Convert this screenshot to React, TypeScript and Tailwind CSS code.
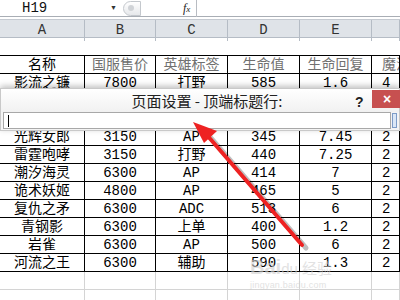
import React from "react";

const cols = ["A", "B", "C", "D", "E", ""];
const grid = "grid grid-cols-[85px_71px_72px_72px_72px_28px]";

const rows: string[][] = [
  ["影流之镰", "7800", "打野", "585", "1.6", "4"],
  ["", "", "", "", "", ""],
  ["", "", "", "", "", ""],
  ["光辉女郎", "3150", "AP", "345", "7.45", "2"],
  ["雷霆咆哮", "3150", "打野", "440", "7.25", "2"],
  ["潮汐海灵", "6300", "AP", "414", "7", "2"],
  ["诡术妖姬", "4800", "AP", "465", "5", "2"],
  ["复仇之矛", "6300", "ADC", "513", "6", "2"],
  ["青钢影", "6300", "上单", "400", "1.2", "2"],
  ["岩雀", "6300", "AP", "500", "6", "2"],
  ["河流之王", "6300", "辅助", "590", "1.3", "2"],
];

const cellFont = "font-['Liberation_Mono','Noto_Sans_CJK_SC',monospace]";

const Cell = ({ text, gray, last }: { text: string; gray?: boolean; last?: boolean }) => (
  <div
    className={`h-[18px] border-r border-b border-black flex items-center overflow-hidden whitespace-nowrap text-[14px] leading-none ${cellFont} ${
      gray ? "text-[#707070]" : "text-black"
    } ${last ? "justify-start pl-[10px]" : "justify-center"}`}
  >
    {text}
  </div>
);

const App = () => {
  return (
    <div className="relative w-[400px] h-[300px] overflow-hidden bg-white">
      {/* formula bar */}
      <div className="h-[17px] flex items-center border-b border-[#a9aeb5] bg-white">
        <div className="w-[110px] pl-[22px] text-[14px] font-['Liberation_Mono',monospace] text-[#111]">
          H19
        </div>
        <div className="text-[7px] text-[#333] w-[10px]">▼</div>
        <div className="ml-[3px] w-[18px] h-[15px] rounded-l-full border border-[#c4c8cd] bg-gradient-to-b from-white to-[#e6e8eb] flex items-center pl-[4px]">
          <div className="w-[6px] h-[6px] rounded-full bg-[#d0d3d7]" />
        </div>
        <div className="ml-[42px] text-[12px] italic font-['Liberation_Serif',serif] text-[#222]">
          f<span className="text-[9px]">x</span>
        </div>
        <div className="ml-[6px] h-[17px] border-l border-[#b8bcc2]" />
      </div>
      <div className="h-[3px] bg-white border-b border-[#c5cad1]" />
      {/* column headers */}
      <div className={`${grid} h-[18px] bg-[#dfe3e8] border-b border-[#b5bcc5]`}>
        {cols.map((c, i) => (
          <div
            key={i}
            className="border-r border-[#b5bcc5] flex items-center justify-center text-[14px] font-['Liberation_Mono',monospace] text-[#333]"
          >
            {c}
          </div>
        ))}
      </div>
      {/* empty row 1 */}
      <div className="h-[18px] border-b border-black" />
      {/* table header */}
      <div className={grid}>
        <Cell text="名称" />
        <Cell text="国服售价" gray />
        <Cell text="英雄标签" gray />
        <Cell text="生命值" gray />
        <Cell text="生命回复" gray />
        <Cell text="魔法值" gray last />
      </div>
      {rows.map((r, i) => (
        <div key={i} className={grid}>
          {r.map((t, j) => (
            <Cell key={j} text={t} last={j === 5} />
          ))}
        </div>
      ))}
      {[0, 1].map((i) => (
        <div key={i} className={grid}>
          {cols.map((_, j) => (
            <div key={j} className="h-[18px] border-r border-b border-[#d4d4d4]" />
          ))}
        </div>
      ))}

      {/* watermark */}
      <div className="absolute left-[250px] top-[257px] text-[#cfcfcf] opacity-60 font-['Liberation_Sans','Noto_Sans_CJK_SC',sans-serif] leading-none">
        <div className="text-[20px] font-bold">
          Bai<span className="text-[15px] font-normal">du 经验</span>
        </div>
        <div className="text-[9px] mt-[4px] tracking-wide">jingyan.baidu.com</div>
      </div>

      {/* dialog */}
      <div className="absolute left-0 top-[88px] w-[400px] h-[43px] bg-[#f4f4f4] border border-[#c9c9c9] shadow-[0_-2px_6px_rgba(0,0,0,0.25)]">
        <div className="h-[23px] relative flex items-center justify-center bg-gradient-to-b from-white to-[#f1f1f1]">
          <span className="ml-[14px] text-[15px] text-[#222] font-['Noto_Sans_CJK_SC',sans-serif] leading-none">
            页面设置 - 顶端标题行:
          </span>
          <span className="absolute left-[354px] top-[3px] text-[14px] font-bold text-[#222] font-['Liberation_Sans',sans-serif]">
            ?
          </span>
          <div className="absolute left-[371px] top-[1px] w-[30px] h-[18px] bg-[#c75050] flex items-center justify-center text-white text-[14px] font-bold font-['Liberation_Sans',sans-serif]">
            ×
          </div>
        </div>
        <div className="flex items-center px-[2px]">
          <div className="flex-1 h-[17px] bg-white border border-[#a8a8a8] flex items-center pl-[4px]">
            <div className="w-[1px] h-[12px] bg-black" />
          </div>
          <div className="ml-[1px] w-[5px] h-[15px] border border-[#7d9cc7] bg-[#dbe7f6]" />
        </div>
      </div>

      {/* arrow */}
      <svg className="absolute left-0 top-0" width="400" height="300" viewBox="0 0 400 300">
        <line x1="306" y1="248" x2="210" y2="137" stroke="rgba(0,0,0,0.25)" strokeWidth="5" strokeLinecap="round" />
        <line x1="302" y1="245" x2="206" y2="134" stroke="#ee2222" strokeWidth="4" strokeLinecap="round" />
        <polygon points="193,122 217,131 204,143" fill="#ee2222" />
      </svg>
    </div>
  );
};

export default App;
